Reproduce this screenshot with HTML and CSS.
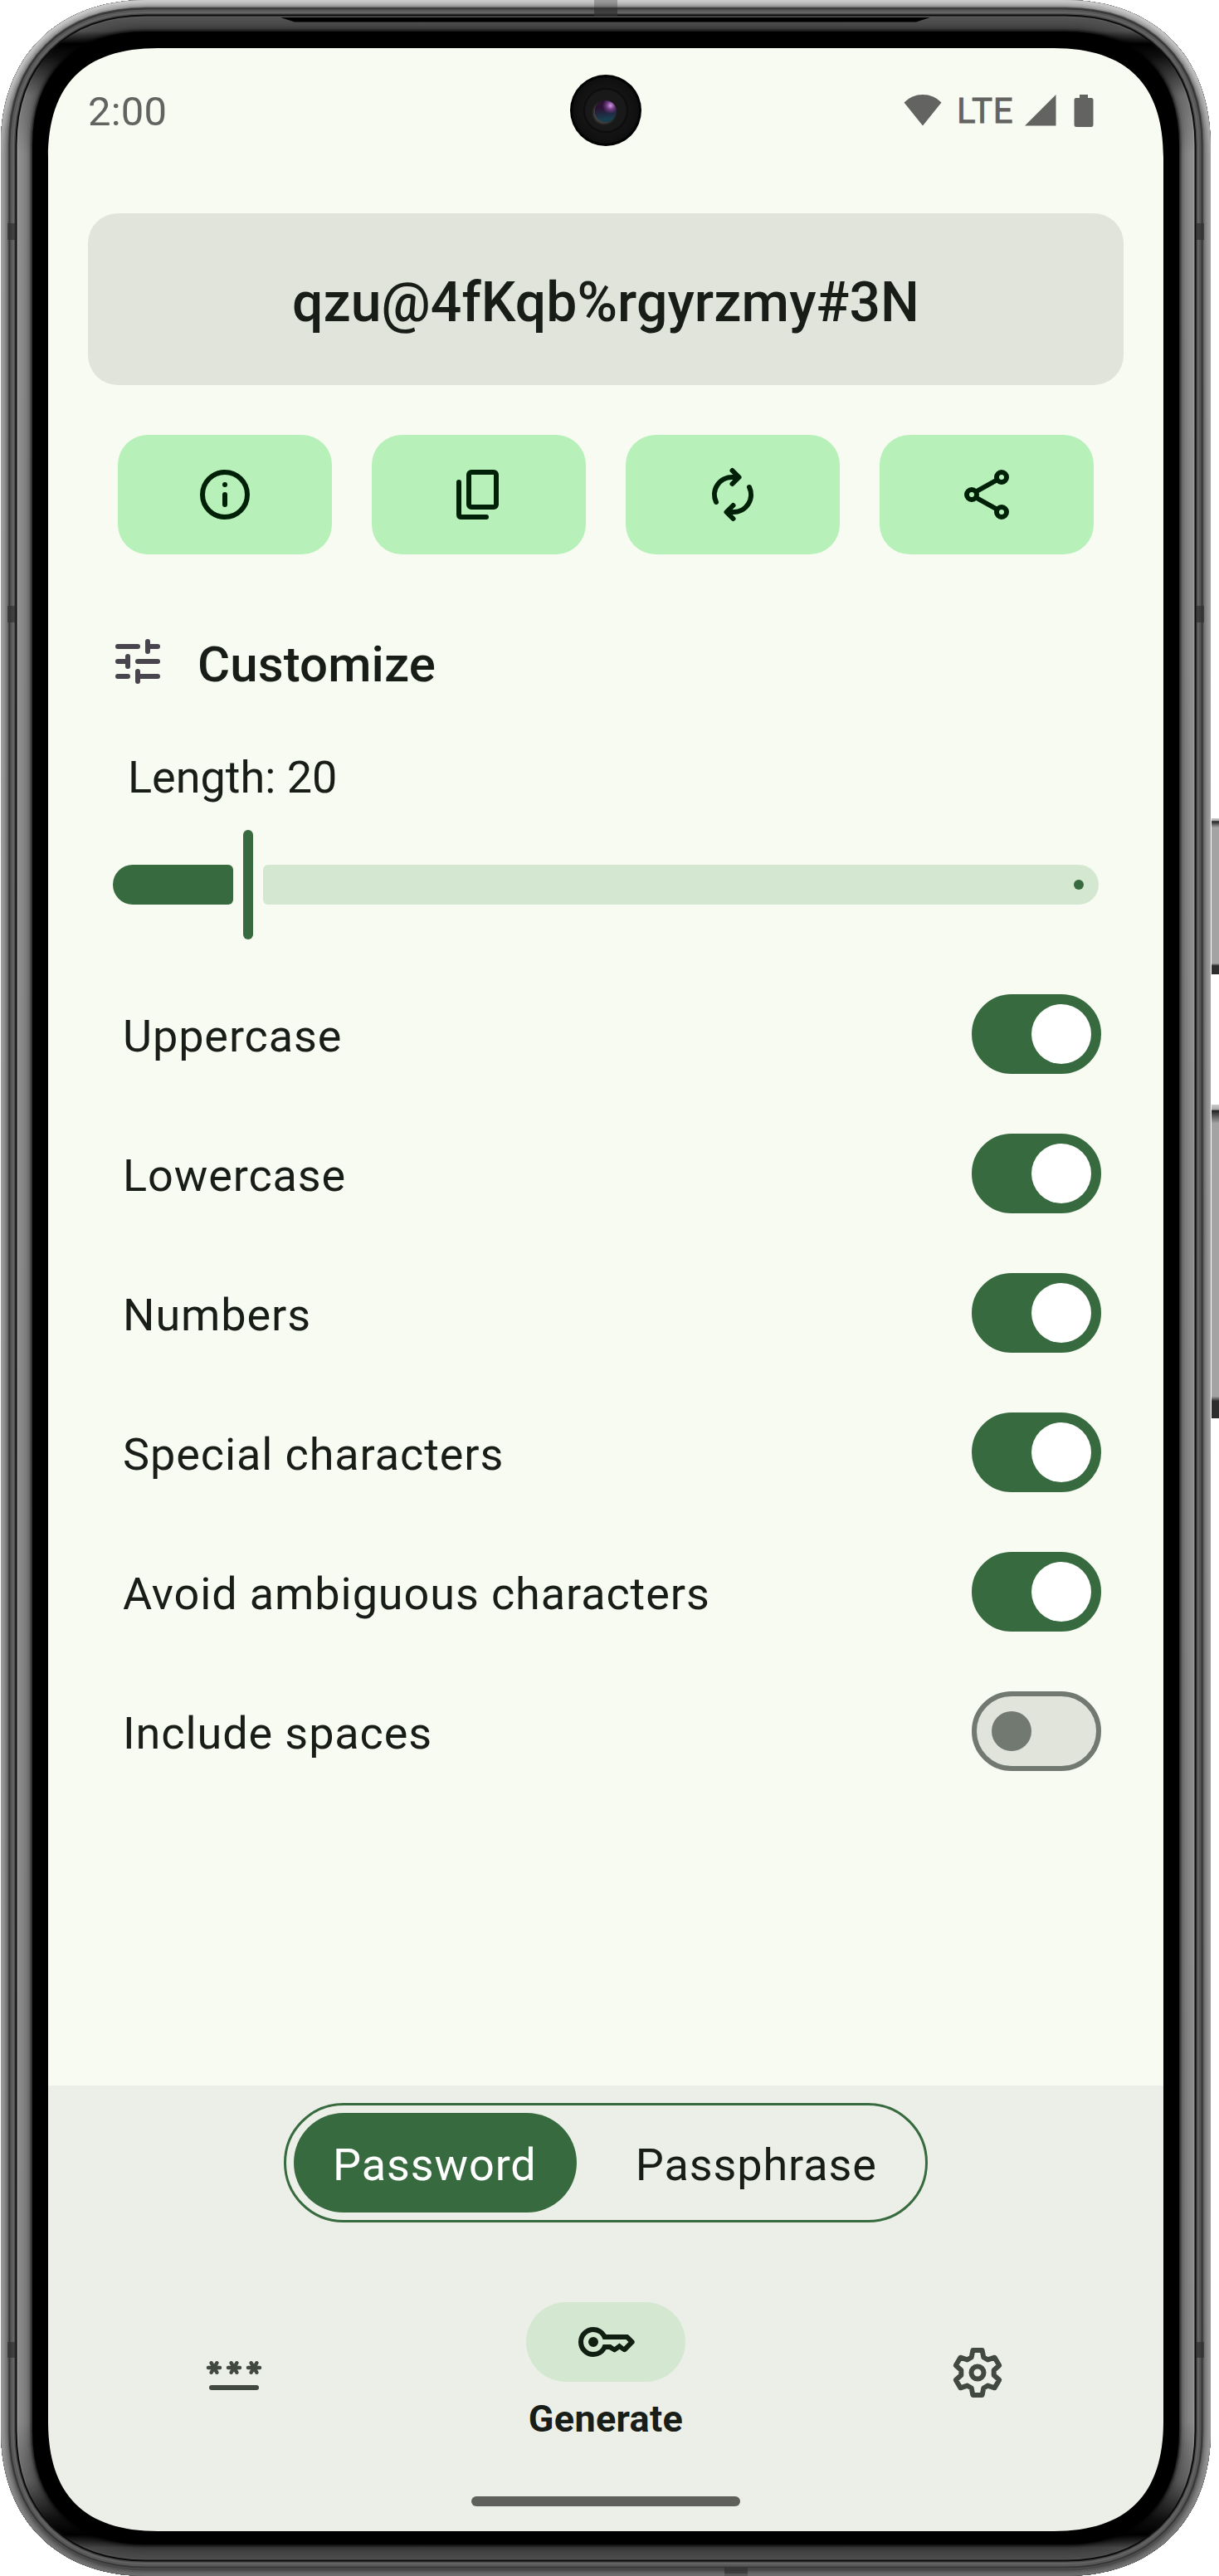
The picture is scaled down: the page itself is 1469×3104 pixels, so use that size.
FILE: index.html
```html
<!DOCTYPE html>
<html lang="en">
<head>
<meta charset="utf-8">
<title>Password generator</title>
<link rel="stylesheet" href="styles.css">
</head>
<body>
<div class="phone">
  <main class="screen">
    <header class="status">
      <span class="time">2:00</span>
      <div class="status-icons">
        <svg width="46" height="38" viewBox="0 0 46 38"><path d="M0.500 9.500Q9.500 0 23 0T45.500 9.500L23 37.500Z"/></svg>
        <span class="network">LTE</span>
        <svg class="signal" width="38" height="38" viewBox="0 0 38 38"><path d="M0 37.500L37.500 0V37.500Z"/></svg>
        <svg class="battery" width="24" height="39" viewBox="0 0 24 39"><path d="M7 0H17V4H21Q23.500 4 23.500 6.500V36Q23.500 39 21 39H3Q.5 39 .5 36V6.500Q.5 4 3 4H7Z"/></svg>
      </div>
    </header>

    <section class="password-card"><span>qzu@4fKqb%rgyrzmy#3N</span></section>

    <div class="actions">
      <button class="action" aria-label="Info">
        <svg class="icon" viewBox="-36 -36 72 72"><circle r="27"/><path d="M0 0V12M0 -12V-12"/></svg>
      </button>
      <button class="action" aria-label="Copy">
        <svg class="icon" viewBox="-36 -36 72 72"><rect x="-12" y="-27" width="33" height="42" rx="3"/><path d="M-24 -15V24Q-24 27 -21 27H9"/></svg>
      </button>
      <button class="action" aria-label="Regenerate">
        <svg class="icon" viewBox="-36 -36 72 72"><path d="M-20 9A21 21 0 0 1 0 -21H7M-.5 -29L7.500 -21L-.5 -13M20 -9A21 21 0 0 1 0 21H-7M.5 29L-7.500 21L.5 13"/></svg>
      </button>
      <button class="action" aria-label="Share">
        <svg class="icon" viewBox="-36 -36 72 72"><circle cx="-18" r="6"/><circle cx="18" cy="-21" r="6"/><circle cx="18" cy="21" r="6"/><path class="butt" d="M-13 -3.500L13 -18M-13 3.500L13 18"/></svg>
      </button>
    </div>

    <section class="customize">
      <h2 class="heading">
        <svg class="icon tune" viewBox="-36 -36 72 72"><path d="M-24 -18H0M12 -24V-12M12 -18H24M-24 0H-12M-12 -6V6M0 0H24M-24 18H-12M0 12V24M0 18H24"/></svg>
        <span>Customize</span>
      </h2>
      <p class="length">Length: 20</p>
      <div class="slider">
        <span class="track-active"></span>
        <span class="handle"></span>
        <span class="track-rest"><i class="stop"></i></span>
      </div>
      <ul class="options">
        <li><span>Uppercase</span><i class="switch on"></i></li>
        <li><span>Lowercase</span><i class="switch on"></i></li>
        <li><span>Numbers</span><i class="switch on"></i></li>
        <li><span>Special characters</span><i class="switch on"></i></li>
        <li><span>Avoid ambiguous characters</span><i class="switch on"></i></li>
        <li><span>Include spaces</span><i class="switch"></i></li>
      </ul>
    </section>

    <footer class="bottom">
      <div class="segmented">
        <span class="segment selected">Password</span>
        <span class="segment">Passphrase</span>
      </div>
      <nav class="nav">
        <a class="nav-item">
          <svg class="icon" viewBox="-36 -36 72 72"><path d="M-27 18H27"/><path class="star" d="M-31 -6H-17M-27.300 -11.700L-20.700 -.3M-20.700 -11.700L-27.300 -.3M-7 -6H7M-3.300 -11.700L3.300 -.3M3.300 -11.700L-3.300 -.3M17 -6H31M20.700 -11.700L27.300 -.3M27.300 -11.700L20.700 -.3"/></svg>
        </a>
        <a class="nav-item active">
          <span class="pill"><svg class="key" viewBox="0 -960 960 960"><path d="M280-400q-33 0-56.500-23.500T200-480t23.500-56.500T280-560t56.500 23.500T360-480t-23.500 56.500T280-400Zm0 160q-100 0-170-70T40-480t70-170 170-70q67 0 121.500 33t86.500 87h335q8 0 15.500 3t13.500 9l80 80q6 6 8.500 13t2.500 15q0 8-2.500 15t-8.500 13L812-330q-5 5-12 8t-14 4q-7 1-14-1t-13-6L700-365l-57 42q-5 4-11 6t-12 2q-6 0-12-2t-11-5L535-360h-47q-32 54-86.500 87T280-240Zm0-80q56 0 98.500-34t56.500-86h125l58 41 82-61 71 55 75-75-40-40H435q-14-52-56.500-86T280-640q-66 0-113 47t-47 113q0 66 47 113t113 47Z"/></svg></span>
          <span class="nav-label">Generate</span>
        </a>
        <a class="nav-item">
          <svg class="icon" viewBox="-36 -36 72 72"><circle r="7.500"/><path d="M-5.600 -27H5.600L7.300 -18.500L12.400 -15.600L20.600 -18.300L26.200 -8.700L19.700 -2.900V2.900L26.200 8.700L20.600 18.300L12.400 15.600L7.300 18.500L5.600 27H-5.600L-7.300 18.500L-12.400 15.600L-20.600 18.300L-26.200 8.700L-19.700 2.900V-2.900L-26.200 -8.700L-20.600 -18.300L-12.400 -15.600L-7.300 -18.500Z"/></svg>
        </a>
      </nav>
      <div class="home-bar"></div>
    </footer>
  </main>

  <!-- device body: concentric metal rings round the display opening -->
  <svg class="frame" width="1469" height="3104" viewBox="0 0 1469 3104">
    <defs>
      <path id="body" d="M176 0H1284C1391 0 1459 68 1459 175V2929C1459 3036 1391 3104 1284 3104H176C69 3104 1 3036 1 2929V175C1 68 69 0 176 0Z"/>
      <clipPath id="ring"><path clip-rule="evenodd" d="M176 0H1284C1391 0 1459 68 1459 175V2929C1459 3036 1391 3104 1284 3104H176C69 3104 1 3036 1 2929V175C1 68 69 0 176 0ZM190 58H1270C1358 58 1402 102 1402 190V2918C1402 3006 1358 3050 1270 3050H190C102 3050 58 3006 58 2918V190C58 102 102 58 190 58Z"/></clipPath>
      <linearGradient id="bezel" gradientUnits="userSpaceOnUse" x1="0" y1="0" x2="0" y2="3104">
        <stop offset="0" stop-color="#5c5c5c"/><stop offset=".012" stop-color="#555"/><stop offset=".017" stop-color="#000"/><stop offset=".022" stop-color="#111"/><stop offset=".037" stop-color="#777"/><stop offset=".06" stop-color="#9a9a9a"/>
        <stop offset=".94" stop-color="#949494"/><stop offset=".963" stop-color="#666"/><stop offset=".978" stop-color="#111"/><stop offset=".984" stop-color="#000"/><stop offset=".989" stop-color="#4c4c4c"/><stop offset="1" stop-color="#555"/>
      </linearGradient>
      <linearGradient id="rim" gradientUnits="userSpaceOnUse" x1="0" y1="0" x2="0" y2="3104">
        <stop offset="0" stop-color="#d4d4d4"/><stop offset=".03" stop-color="#ccc"/><stop offset=".06" stop-color="#aaa"/><stop offset=".95" stop-color="#a0a0a0"/><stop offset="1" stop-color="#777"/>
      </linearGradient>
      <linearGradient id="rim-inner" gradientUnits="userSpaceOnUse" x1="0" y1="0" x2="0" y2="3104">
        <stop offset="0" stop-color="#999"/><stop offset=".05" stop-color="#757575"/><stop offset=".95" stop-color="#707070"/><stop offset="1" stop-color="#444"/>
      </linearGradient>
      <linearGradient id="key-metal" x1="0" y1="0" x2="0" y2="1">
        <stop offset="0" stop-color="#ccc"/><stop offset=".015" stop-color="#aaa"/><stop offset=".02" stop-color="#222"/><stop offset=".04" stop-color="#666"/><stop offset=".06" stop-color="#a3a3a3"/><stop offset=".93" stop-color="#a3a3a3"/><stop offset=".945" stop-color="#2d2d2d"/><stop offset="1" stop-color="#2d2d2d"/>
      </linearGradient>
    </defs>
    <rect x="1460" y="986" width="9" height="188" fill="url(#key-metal)"/>
    <rect x="1460" y="1331" width="9" height="378" fill="url(#key-metal)"/>
    <g clip-path="url(#ring)" fill="none">
      <use href="#body" fill="#000"/>
      <g stroke="url(#bezel)" stroke-opacity=".3">
        <use href="#body" stroke-width="76"/><use href="#body" stroke-width="73"/><use href="#body" stroke-width="70"/><use href="#body" stroke-width="67"/><use href="#body" stroke-width="62"/><use href="#body" stroke-width="56"/><use href="#body" stroke-width="50"/><use href="#body" stroke-width="44"/>
      </g>
      <use href="#body" stroke="url(#bezel)" stroke-width="42"/>
      <path d="M338 21L355 26.500H1104L1121 21Z" fill="#000"/>
      <g>
        <use href="#body" stroke="#0c0c0c" stroke-width="39"/>
        <use href="#body" stroke="#4c4c4c" stroke-width="35"/>
        <use href="#body" stroke="#646464" stroke-width="32"/>
        <use href="#body" stroke="#585858" stroke-width="28"/>
        <use href="#body" stroke="#383838" stroke-width="23"/>
        <use href="#body" stroke="#505050" stroke-width="19"/>
        <use href="#body" stroke="url(#rim-inner)" stroke-width="17"/>
        <use href="#body" stroke="url(#rim)" stroke-opacity=".35" stroke-width="13"/>
        <use href="#body" stroke="url(#rim)" stroke-opacity=".4" stroke-width="9"/>
        <use href="#body" stroke="url(#rim)" stroke-opacity=".5" stroke-width="5"/>
      </g>
      <g fill="#303030" fill-opacity=".7">
        <rect x="9" y="269" width="9" height="20"/><rect x="9" y="730" width="9" height="20"/><rect x="9" y="2822" width="9" height="19"/>
        <rect x="1442" y="269" width="9" height="20"/><rect x="1442" y="730" width="9" height="20"/><rect x="1442" y="2822" width="9" height="19"/>
        <rect x="716" y="10" width="28" height="9"/><rect x="873" y="3094" width="28" height="7"/>
      </g>
      <g fill="#303030" fill-opacity=".3">
        <rect x="716" y="0" width="28" height="10"/><rect x="873" y="3101" width="28" height="3"/>
      </g>
    </g>
  </svg>
  <div class="camera"><i class="lens"></i></div>
</div>
</body>
</html>
```
FILE: styles.css
```css
* { box-sizing: border-box; margin: 0; padding: 0; }
body { background: #fff; font-family: Roboto, sans-serif; color: #191d18; }
.phone { position: relative; width: 1469px; height: 3104px; padding: 58px 67px 54px 58px; overflow: hidden; }
.screen { width: 1344px; height: 2992px; background: #f8fbf2; display: flex; flex-direction: column; border-radius: 100px; overflow: hidden; }
.frame { position: absolute; left: 0; top: 0; }

.camera { position: absolute; left: 687px; top: 90px; width: 86px; height: 86px; border-radius: 50%; background: radial-gradient(circle, #191919 0 24px, #0b0b0b 26px, #141414 28px, #0f0f0f 39px, #000 41px); display: flex; align-items: center; justify-content: center; }
.lens { width: 26px; height: 26px; margin-top: 2px; border-radius: 50%; background: radial-gradient(circle at 72% 24%, #d09ae6 0, #6d3a80 18%, transparent 36%), linear-gradient(175deg, #2b1233 35%, #17404f 85%); box-shadow: -2px 2px 3px #4a4a4a; }

.status { height: 199px; flex: none; display: flex; justify-content: space-between; align-items: flex-start; padding: 49px 84px 0 48px; color: #636461; }
.time { font-size: 49px; line-height: 56px; letter-spacing: .2px; }
.status-icons { display: flex; align-items: flex-start; fill: #636461; padding-top: 7px; }
.network { width: 83px; margin: -4px 0 0 17px; font-size: 42px; line-height: 48px; letter-spacing: .9px; padding-left: 1px; -webkit-text-stroke: .8px #636461; }
.battery { margin-left: 21px; }

.password-card { flex: none; height: 207px; margin: 0 48px; padding-top: 7px; border-radius: 36px; background: #e1e4db; display: flex; align-items: center; justify-content: center; font-size: 66px; font-weight: 500; letter-spacing: .1px; }

.actions { flex: none; display: grid; grid-template-columns: repeat(4, 258px); gap: 48px; margin: 60px 84px 0; }
.action { height: 144px; border: 0; border-radius: 36px; background: #b7f1b9; color: #002107; display: flex; align-items: center; justify-content: center; }
.icon { width: 72px; height: 72px; flex: none; fill: none; stroke: currentColor; stroke-width: 6; stroke-linecap: round; stroke-linejoin: round; }
.butt { stroke-linecap: butt; }
.star { stroke-width: 4.500; }

.customize { flex: none; margin: 93px 75px 0 72px; }
.heading { display: flex; align-items: center; gap: 36px; height: 72px; font-size: 60px; font-weight: 500; letter-spacing: .1px; }
.heading span { padding-top: 6px; }
.tune { color: #49454f; }
.length { margin: 62px 0 0 24px; font-size: 54px; line-height: 84px; }
.slider { display: flex; align-items: center; gap: 12px; height: 132px; margin: 21px 0 0 6px; width: 1188px; }
.track-active { width: 145px; height: 48px; background: #376a3e; border-radius: 24px 6px 6px 24px; }
.handle { width: 12px; height: 132px; border-radius: 6px; background: #376a3e; }
.track-rest { flex: 1; height: 48px; background: #d4e8d1; border-radius: 6px 24px 24px 6px; display: flex; align-items: center; justify-content: flex-end; padding-right: 18px; }
.stop { width: 12px; height: 12px; border-radius: 50%; background: #376a3e; }
.options { list-style: none; margin-top: 30px; }
.options li { height: 168px; display: flex; align-items: center; justify-content: space-between; padding-left: 18px; font-size: 54px; letter-spacing: .9px; }
.options span { padding-top: 4px; }
.switch { width: 156px; height: 96px; border-radius: 48px; background: #e1e4db; border: 6px solid #727970; display: flex; align-items: center; padding: 0 18px; }
.switch::before { content: ""; width: 48px; height: 48px; border-radius: 50%; background: #727970; }
.switch.on { background: #376a3e; border-color: #376a3e; padding: 0 6px; justify-content: flex-end; }
.switch.on::before { width: 72px; height: 72px; background: #fff; }

.bottom { margin-top: auto; height: 537px; flex: none; background: #ebefe7; display: flex; flex-direction: column; align-items: center; padding-top: 21px; }
.segmented { height: 144px; flex: none; border: 3px solid #376a3e; border-radius: 72px; padding: 9px; display: flex; gap: 24px; width: 776px; }
.segment { height: 120px; padding: 0 48px 0 47px; line-height: 125px; font-size: 54px; letter-spacing: .9px; border-radius: 60px; }
.selected { background: #376a3e; color: #fff; }
.nav { align-self: stretch; flex: none; height: 168px; margin-top: 96px; display: grid; grid-template-columns: repeat(3, 1fr); }
.nav-item { display: flex; flex-direction: column; align-items: center; justify-content: center; color: #424940; }
.nav-item.active { justify-content: flex-start; }
.pill { width: 192px; height: 96px; border-radius: 48px; background: #d4e8d1; display: flex; align-items: center; justify-content: center; }
.key { width: 72px; height: 72px; fill: #101f12; }
.nav-label { margin-top: 17px; font-size: 45px; line-height: 56px; font-weight: 700; color: #191d18; letter-spacing: .3px; }
.home-bar { width: 324px; height: 12px; border-radius: 6px; background: #5f605c; margin-top: 66px; }
```
